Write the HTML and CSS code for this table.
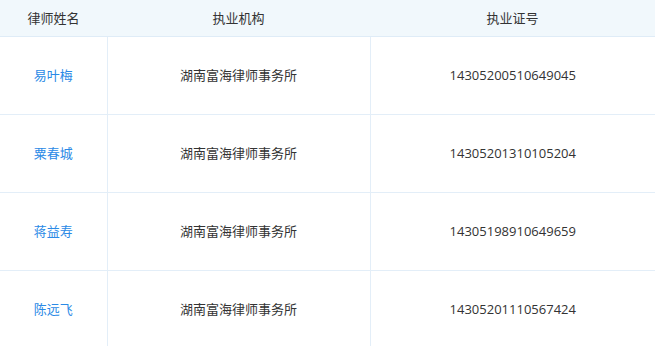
FILE: index.html
```html
<!DOCTYPE html>
<html lang="zh-CN">
<head>
<meta charset="utf-8">
<link rel="stylesheet" href="styles.css">
</head>
<body>
<table class="lawyers">
  <colgroup>
    <col class="c-name">
    <col class="c-org">
    <col class="c-no">
  </colgroup>
  <thead>
    <tr><th>律师姓名</th><th>执业机构</th><th>执业证号</th></tr>
  </thead>
  <tbody>
    <tr><td><a class="name" href="#">易叶梅</a></td><td>湖南富海律师事务所</td><td class="num">14305200510649045</td></tr>
    <tr><td><a class="name" href="#">粟春城</a></td><td>湖南富海律师事务所</td><td class="num">14305201310105204</td></tr>
    <tr><td><a class="name" href="#">蒋益寿</a></td><td>湖南富海律师事务所</td><td class="num">14305198910649659</td></tr>
    <tr><td><a class="name" href="#">陈远飞</a></td><td>湖南富海律师事务所</td><td class="num">14305201110567424</td></tr>
  </tbody>
</table>
</body>
</html>
```
FILE: styles.css
```css
html, body {
  margin: 0;
  padding: 0;
  background: #fff;
}
body {
  font-family: "Open Sans", "Noto Sans CJK SC", sans-serif;
  font-size: 13px;
  color: #333;
}
.lawyers {
  width: 655px;
  border-collapse: collapse;
  table-layout: fixed;
}
.c-name { width: 107px; }
.c-org { width: 263px; }
.c-no { width: 285px; }
.lawyers th {
  height: 34px;
  padding: 0 0 2px;
  background: #f1f8fc;
  font-weight: normal;
  color: #333;
  text-align: center;
  border-bottom: 1px solid #dfecf7;
}
.lawyers td {
  height: 75px;
  padding: 0 0 2px;
  text-align: center;
  border-bottom: 1px solid #e3eef8;
  border-left: 1px solid #e3eef8;
}
.lawyers td:first-child {
  border-left: none;
}
.name {
  color: #2b8ae6;
  text-decoration: none;
}
.num {
  font-family: "Open Sans", sans-serif;
}
```
